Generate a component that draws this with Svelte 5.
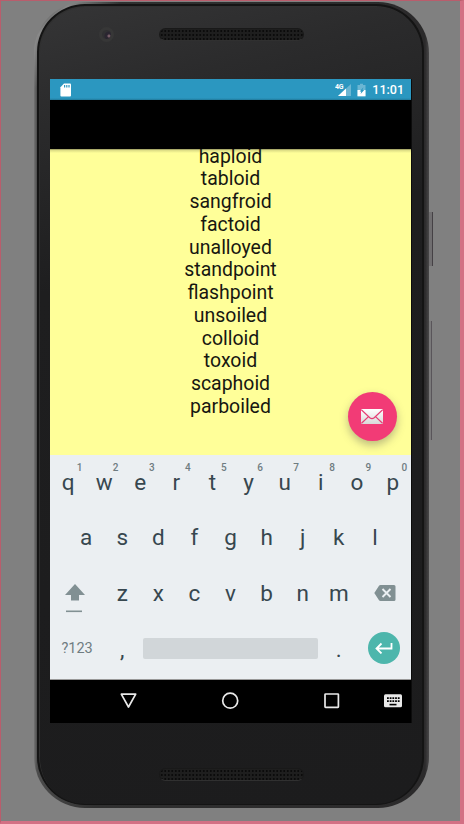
<script>
  const words = ['haploid', 'tabloid', 'sangfroid', 'factoid', 'unalloyed', 'standpoint', 'flashpoint', 'unsoiled', 'colloid', 'toxoid', 'scaphoid', 'parboiled'];
  const top = 'qwertyuiop'.split('');
  const middle = 'asdfghjkl'.split('');
  const bottom = 'zxcvbnm'.split('');
</script>

<div class="page">
  <div class="power"></div>
  <div class="volume"></div>
  <div class="phone">
    <div class="face">
      <header class="bezel">
        <div class="camera"></div>
        <div class="speaker"></div>
      </header>

      <main class="screen">
        <div class="status">
          <svg class="sd" width="12" height="14" viewBox="0 0 12 14"><path fill="#fff" d="M4 .5h6q1 0 1 1V12.500q0 1-1 1H1.400q-1 0-1-1V4.300z" /><path stroke="#2b97c0" stroke-width="1.200" d="M4.600 2v2.500M6.800 2v2.500M9 2v2.500" /></svg>
          <span class="spacer"></span>
          <svg class="signal" width="17" height="14" viewBox="0 0 17 14"><path fill="#fff" fill-opacity=".3" d="M16 1v12H3z" /><path fill="#fff" d="M11 5.500V13H3z" /><text x="0" y="6" font-size="7" font-weight="700" fill="#fff" textLength="8.500">4G</text></svg>
          <svg class="battery" width="9" height="14" viewBox="0 0 9 14"><path fill="#fff" fill-opacity=".3" d="M3 .7h3V2h2.500v11.300H.5V2H3z" /><path fill="#fff" d="M.5 7h8v6.300h-8z" /><path fill="#2b97c0" d="M6.500 4.200 2.600 8.600h1.700L3.600 11 7.200 7H5.400z" /></svg>
          <span class="clock">11:01</span>
        </div>
        <div class="appbar"></div>
        <section class="content">
          <div class="words">
            {#each words as word}<p>{word}</p>{/each}
          </div>
          <button class="fab" aria-label="Mail">
            <svg width="22" height="15" viewBox="0 0 22 15">
              <defs><linearGradient id="paper" x2="0" y2="1"><stop stop-color="#fff" /><stop offset="1" stop-color="#d9d9d9" /></linearGradient></defs>
              <rect width="22" height="15" rx="1" fill="url(#paper)" />
              <path d="m.3.7 8.500 8q2.200 1.800 4.400 0l8.500-8M.5 14.300l7-6.700M21.500 14.300l-7-6.700" fill="none" stroke="#e53d74" stroke-width="1.200" />
            </svg>
          </button>
        </section>

        <section class="keyboard">
          <div class="row">
            {#each top as key, i}<span class="key">{key}<small>{(i + 1) % 10}</small></span>{/each}
          </div>
          <div class="row">
            {#each middle as key}<span class="key">{key}</span>{/each}
          </div>
          <div class="row third">
            <span class="wide shift"><svg width="20" height="29" viewBox="0 0 20 29"><path fill="#819093" d="m10 0 10 11h-6v5.500H6V11H0z" /><path fill="#819093" d="M1 26.500h16v1.600H1z" /></svg></span>
            {#each bottom as key}<span class="key">{key}</span>{/each}
            <span class="wide delete"><svg width="22" height="16" viewBox="0 0 22 16"><path fill="#819093" d="M6.500 0H20q1.500 0 1.500 1.500v13Q21.500 16 20 16H6.500Q5.500 16 5 15.200L.3 8 5 .8Q5.500 0 6.500 0z" /><path stroke="#ebeff2" stroke-width="1.900" d="m8.500 4 8 8m0-8-8 8" /></svg></span>
          </div>
          <div class="row last">
            <span class="wide symbols">?123</span>
            <span class="key">,</span>
            <span class="space"><i></i></span>
            <span class="key">.</span>
            <span class="wide"><b class="enter"><svg width="18" height="12" viewBox="0 0 18 12"><path d="M16.500 1v5.500H2M6.500 1.500 1.500 6.500l5 5" fill="none" stroke="#fff" stroke-width="1.800" /></svg></b></span>
          </div>
        </section>

        <nav>
          <svg width="361" height="42" viewBox="0 0 361 42" fill="none" stroke="#e9e9e9" stroke-width="1.700">
            <path stroke-linejoin="round" d="M71.300 14.200h14.400L78.500 27z" />
            <circle cx="180.200" cy="20.700" r="7.500" />
            <rect x="275" y="14" width="13.400" height="13.400" rx=".6" />
            <rect x="334" y="14.300" width="18" height="13" rx="1.500" fill="#e9e9e9" stroke="none" />
            <path stroke="#000" stroke-width="1.800" stroke-dasharray="1.800 .9" d="M337 18.200h12.600M337 21.200h12.600" />
            <path stroke="#000" stroke-width="1.600" d="M339.500 24.600h7" />
          </svg>
        </nav>
      </main>

      <footer><div class="speaker"></div></footer>
    </div>
  </div>
</div>

<style>
  .page {
    position: relative;
    box-sizing: border-box;
    width: 464px;
    height: 824px;
    padding: 1px 0 0 33px;
    background: #808080;
    border: solid #d37084;
    border-width: 1px 4px 3px 1px;
    border-top-color: #b95d6c;
    border-left-color: #b95d6c;
    font-family: Roboto, sans-serif;
    overflow: hidden;
  }
  .power, .volume {
    position: absolute;
    box-sizing: border-box;
    left: 427px;
    border-right: 1px solid #454145;
    background: #706e70;
  }
  .power { top: 211px; width: 5px; height: 54px; }
  .volume { top: 320px; width: 4px; height: 119px; background: #7a797a; border-color: #59555a; }
  .phone {
    position: relative;
    box-sizing: border-box;
    width: 395px;
    height: 806px;
    padding: 2px 5px 3px 3px;
    border-radius: 51px;
    background:
      linear-gradient(135deg, #8880 12px, #999c 26px, #8880 62px),
      linear-gradient(90deg, #747474 0, #4c4c4c 3px, #303030 60px, #2b2a2b 391px, #484748 100%);
  }
  .face {
    box-sizing: border-box;
    height: 801px;
    border: 2px solid #141414;
    border-bottom-width: 1px;
    border-radius: 48px;
    background: linear-gradient(165deg, #353536 0, #2b2b2c 12%, #1e1e1f 32%, #1c1c1d 100%);
    box-shadow: inset 1px 1px 0 #303030;
    padding-left: 11px;
  }
  .bezel {
    display: flex;
    align-items: flex-start;
    height: 73px;
    padding: 22px 0 0 50px;
    box-sizing: border-box;
  }
  .camera {
    width: 9px;
    height: 9px;
    border: 3px solid #373737;
    border-radius: 50%;
    margin: -1px 43px 0 -1px;
    background: radial-gradient(circle at 7px 6px, #785e68 0 1px, #2c2632 2px, #29252f 4px, #303032 5px);
  }
  .speaker {
    box-sizing: border-box;
    width: 145px;
    height: 13px;
    border: 1px solid #191919;
    border-bottom-color: #303030;
    border-radius: 7px;
    background: radial-gradient(circle, #0b0b0b 0 .8px, #1e1e1e 1.400px) 0 0 / 3.500px 4px;
  }
  .bezel .speaker { margin-left: 2px; }
  .screen { width: 361px; height: 643.500px; background: #000; box-shadow: 1px 0 #0c0c0c; }
  .status {
    display: flex;
    align-items: center;
    height: 21px;
    padding: 0 7px 0 10px;
    box-sizing: border-box;
    background: linear-gradient(#2b97c0 19px, #21799a 21px);
    color: #fff;
  }
  .spacer { flex: 1; }
  .battery { margin: 0 6px 0 5px; }
  .clock { padding-top: 1px; font-size: 12.500px; font-weight: 500; line-height: 20px; }
  .appbar { height: 48.500px; }
  .content {
    position: relative;
    height: 306.500px;
    overflow: hidden;
    background: linear-gradient(#8f8f5c 0, #e0e087 1.500px, #ffff99 4px);
  }
  .words { margin-top: -3px; text-align: center; font-size: 19.450px; line-height: 22.770px; color: #171711; }
  .words p { margin: 0; }
  .fab {
    position: absolute;
    left: 297.500px;
    top: 243.500px;
    display: flex;
    align-items: center;
    justify-content: center;
    width: 49px;
    height: 49px;
    padding: 0;
    border: 0;
    border-radius: 50%;
    background: #f23b76;
    box-shadow: 0 4px 9px #5556;
  }
  .keyboard { height: 225px; box-sizing: border-box; background: #ebeff2; border-bottom: 1px solid #999; color: #37474f; }
  .row { display: flex; justify-content: center; height: 55.200px; }
  .key { position: relative; width: 36.100px; text-align: center; font-size: 22.500px; line-height: 54px; }
  .key small { position: absolute; left: 25px; top: 7px; font-size: 10px; line-height: 12px; font-weight: 500; width: 9px; color: #6f7c81; }
  .wide { display: flex; flex: none; width: 54.150px; align-items: center; justify-content: center; }
  .third .key, .last .key { line-height: 56px; }
  .shift { box-sizing: border-box; padding-top: 11px; padding-right: 4px; }
  .delete { box-sizing: border-box; padding-left: 3px; }
  .symbols { font-size: 14.500px; color: #6f7c81; }
  .space { display: flex; align-items: center; justify-content: center; width: 180.500px; }
  .space i { width: 174.500px; height: 21px; border-radius: 2px; background: #d1d6d9; }
  .enter { display: flex; align-items: center; justify-content: center; width: 32px; height: 32px; border-radius: 50%; background: #4db6ac; }
  nav { height: 42px; }
  nav svg { display: block; }
  footer { padding: 45.500px 0 0 109px; }
</style>
